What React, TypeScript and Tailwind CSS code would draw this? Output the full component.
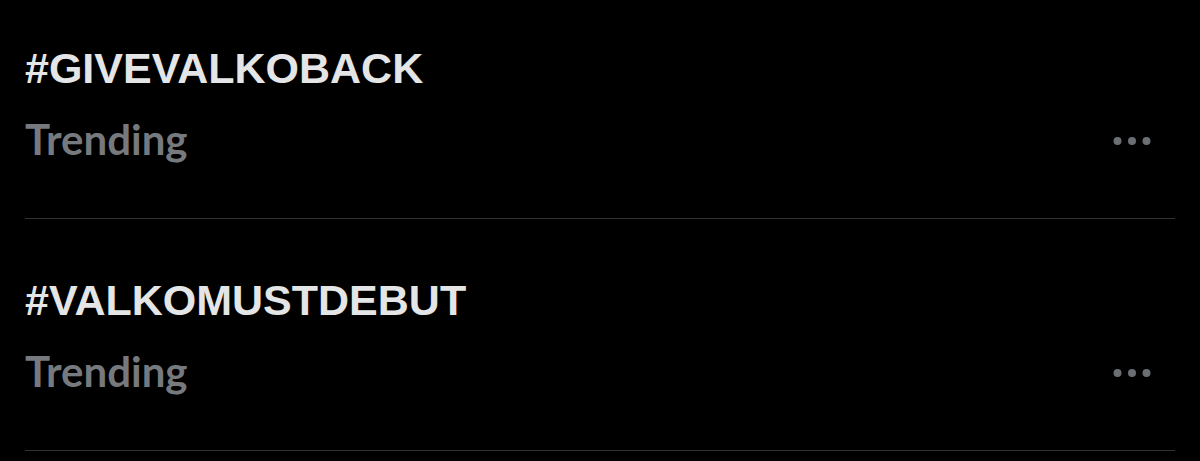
const trends = ["#GIVEVALKOBACK", "#VALKOMUSTDEBUT"];

function MoreDots() {
  return (
    <svg width="38" height="10" viewBox="0 0 38 10" aria-hidden>
      <circle cx="4.5" cy="5" r="4" fill="#6b6f73" />
      <circle cx="19" cy="5" r="4" fill="#6b6f73" />
      <circle cx="33.5" cy="5" r="4" fill="#6b6f73" />
    </svg>
  );
}

function TrendRow({ tag, first }: { tag: string; first?: boolean }) {
  return (
    <div className={first ? "pt-[44px]" : "pt-[57px]"}>
      <div className="px-[25px]">
        <div className="font-['Liberation_Sans',Arial,sans-serif] text-[43px] leading-[48px] font-bold text-[#e3e5e6]">
          {tag}
        </div>
        <div className="mt-[23px] flex items-center justify-between">
          <span className="font-['Lato',sans-serif] text-[42px] leading-[48px] font-bold text-[#76797d]">
            Trending
          </span>
          <span className="mr-[24px] mt-[4px] flex">
            <MoreDots />
          </span>
        </div>
      </div>
      <div className="mx-[25px] mt-[55px] h-px bg-[#2f3336]" />
    </div>
  );
}

export default function App() {
  return (
    <div className="h-[461px] w-[1200px] overflow-hidden bg-black">
      {trends.map((t, i) => (
        <TrendRow key={t} tag={t} first={i === 0} />
      ))}
    </div>
  );
}
